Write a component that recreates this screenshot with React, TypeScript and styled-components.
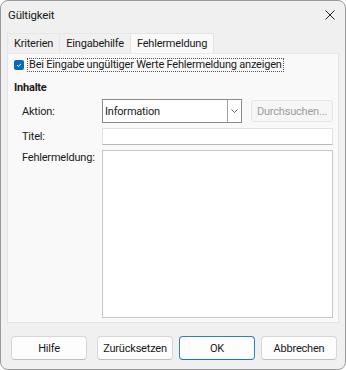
import styled, { createGlobalStyle } from "styled-components";

const GlobalStyle = createGlobalStyle`
  html, body {
    margin: 0;
    padding: 0;
    background: #ffffff;
  }

  body {
    font-family: Roboto, "Liberation Sans", sans-serif;
    font-size: 11px;
    letter-spacing: -0.2px;
    color: #1a1a1a;
  }
`;

const StyledWindow = styled.div`
  box-sizing: border-box;
  width: 346px;
  height: 370px;
  display: flex;
  flex-direction: column;
  background: #f0f0f0;
  border: 1px solid #9a9a9a;
  border-radius: 8px;
  overflow: hidden;
`;

const StyledTitleBar = styled.div`
  height: 31px;
  display: flex;
  align-items: center;
  justify-content: space-between;
  padding: 0 7px 0 7px;
`;

const StyledTitle = styled.span`
  font-size: 11.5px;
  margin-top: -3px;
`;

const StyledClose = styled.button`
  width: 16px;
  height: 16px;
  padding: 0;
  border: none;
  background: transparent;
  display: flex;
  align-items: center;
  justify-content: center;
  margin-top: -4px;
`;

const StyledBody = styled.div`
  flex: 1;
  display: flex;
  flex-direction: column;
  padding: 1px 6px 0 6px;
`;

const StyledTabs = styled.div`
  display: flex;
  height: 20px;
`;

const StyledTab = styled.div<{ $active?: boolean }>`
  box-sizing: border-box;
  height: 20px;
  padding: 0 6px;
  display: flex;
  align-items: center;
  background: ${(p) => (p.$active ? "#f9f9f9" : "#f0f0f0")};
  border: 1px solid ${(p) => (p.$active ? "#e4e4e4" : "#e6e6e6")};
  border-bottom: none;
  margin-right: -1px;
`;

const StyledPanel = styled.div`
  box-sizing: border-box;
  height: 270px;
  background: #f9f9f9;
  border: 1px solid #e4e4e4;
  border-top: 1px solid #e9e9e9;
  padding: 4px 5px 5px 5px;
  display: flex;
  flex-direction: column;
`;

const StyledCheckRow = styled.label`
  display: flex;
  align-items: center;
  gap: 3px;
  height: 14px;
`;

const StyledCheckBox = styled.span`
  width: 10px;
  height: 10px;
  border-radius: 2px;
  background: #0a66c2;
  display: flex;
  align-items: center;
  justify-content: center;
  margin-left: 1px;
`;

const StyledCheckLabel = styled.span`
  border: 1px dotted #555555;
  padding: 0 1px 0 1px;
  line-height: 12px;
  height: 12px;
  display: flex;
  align-items: center;
  white-space: nowrap;
`;

const StyledHeading = styled.div`
  font-weight: bold;
  margin: 8px 0 0 1px;
  height: 16px;
  line-height: 16px;
`;

const StyledForm = styled.div`
  display: grid;
  grid-template-columns: 80px 1fr;
  grid-template-rows: 24px 17px 1fr;
  row-gap: 5px;
  flex: 1;
  margin-top: 3px;
  padding-left: 9px;
`;

const StyledLabel = styled.div<{ $top?: boolean }>`
  display: flex;
  align-items: ${(p) => (p.$top ? "flex-start" : "center")};
  margin-top: ${(p) => (p.$top ? "1px" : "0")};
  white-space: nowrap;
`;

const StyledFieldRow = styled.div`
  display: flex;
  align-items: center;
  gap: 9px;
`;

const StyledCombo = styled.div`
  box-sizing: border-box;
  width: 140px;
  height: 24px;
  display: flex;
  background: #ffffff;
  border: 1px solid #8a8a8a;
`;

const StyledComboText = styled.div`
  flex: 1;
  display: flex;
  align-items: center;
  padding-left: 2px;
`;

const StyledComboArrow = styled.div`
  width: 13px;
  border-left: 1px solid #a0a0a0;
  display: flex;
  align-items: center;
  justify-content: center;
`;

const StyledBrowse = styled.button`
  box-sizing: border-box;
  width: 82px;
  height: 22px;
  font: inherit;
  letter-spacing: inherit;
  color: #9c9c9c;
  background: #f6f6f6;
  border: 1px solid #e6e6e6;
  border-radius: 3px;
  padding: 0;
`;

const StyledInput = styled.div<{ $tall?: boolean }>`
  box-sizing: border-box;
  width: 231px;
  height: ${(p) => (p.$tall ? "168px" : "17px")};
  background: #ffffff;
  border: 1px solid ${(p) => (p.$tall ? "#c8c8c8" : "#e2e2e2")};
  border-bottom-color: ${(p) => (p.$tall ? "#c8c8c8" : "#b8b8b8")};
`;

const StyledFooter = styled.div`
  display: flex;
  align-items: center;
  padding: 13px 0 0 4px;
  gap: 6px;
`;

const StyledButton = styled.button<{ $primary?: boolean; $spaced?: boolean }>`
  box-sizing: border-box;
  width: 76px;
  height: 24px;
  font: inherit;
  letter-spacing: inherit;
  color: #1a1a1a;
  background: #fdfdfd;
  border: 1px solid ${(p) => (p.$primary ? "#2f7fd0" : "#d6d6d6")};
  border-bottom-color: ${(p) => (p.$primary ? "#1f6fc0" : "#c0c0c0")};
  border-radius: 4px;
  padding: 0;
  margin-right: ${(p) => (p.$spaced ? "4px" : "0")};
`;

const App: React.FunctionComponent = (): React.ReactElement => {
  return (
    <>
      <GlobalStyle />
      <StyledWindow>
        <StyledTitleBar>
          <StyledTitle>Gültigkeit</StyledTitle>
          <StyledClose>
            <svg width="10" height="10" viewBox="0 0 10 10">
              <path d="M0.5 0.5 L9.5 9.5 M9.5 0.5 L0.5 9.5" stroke="#222" strokeWidth="1" />
            </svg>
          </StyledClose>
        </StyledTitleBar>
        <StyledBody>
          <StyledTabs>
            <StyledTab>Kriterien</StyledTab>
            <StyledTab>Eingabehilfe</StyledTab>
            <StyledTab $active>Fehlermeldung</StyledTab>
          </StyledTabs>
          <StyledPanel>
            <StyledCheckRow>
              <StyledCheckBox>
                <svg width="8" height="8" viewBox="0 0 8 8">
                  <path d="M2 4.2 L3.4 5.4 L6 2.8" stroke="#fff" strokeWidth="1" fill="none" />
                </svg>
              </StyledCheckBox>
              <StyledCheckLabel>Bei Eingabe ungültiger Werte Fehlermeldung anzeigen</StyledCheckLabel>
            </StyledCheckRow>
            <StyledHeading>Inhalte</StyledHeading>
            <StyledForm>
              <StyledLabel>Aktion:</StyledLabel>
              <StyledFieldRow>
                <StyledCombo>
                  <StyledComboText>Information</StyledComboText>
                  <StyledComboArrow>
                    <svg width="7" height="4" viewBox="0 0 7 4">
                      <path d="M0.5 0.5 L3.5 3.5 L6.5 0.5" stroke="#555" strokeWidth="0.9" fill="none" />
                    </svg>
                  </StyledComboArrow>
                </StyledCombo>
                <StyledBrowse disabled>Durchsuchen...</StyledBrowse>
              </StyledFieldRow>
              <StyledLabel>Titel:</StyledLabel>
              <StyledInput />
              <StyledLabel $top>Fehlermeldung:</StyledLabel>
              <StyledInput $tall />
            </StyledForm>
          </StyledPanel>
          <StyledFooter>
            <StyledButton $spaced>Hilfe</StyledButton>
            <StyledButton>Zurücksetzen</StyledButton>
            <StyledButton $primary>OK</StyledButton>
            <StyledButton>Abbrechen</StyledButton>
          </StyledFooter>
        </StyledBody>
      </StyledWindow>
    </>
  );
};

export default App;
